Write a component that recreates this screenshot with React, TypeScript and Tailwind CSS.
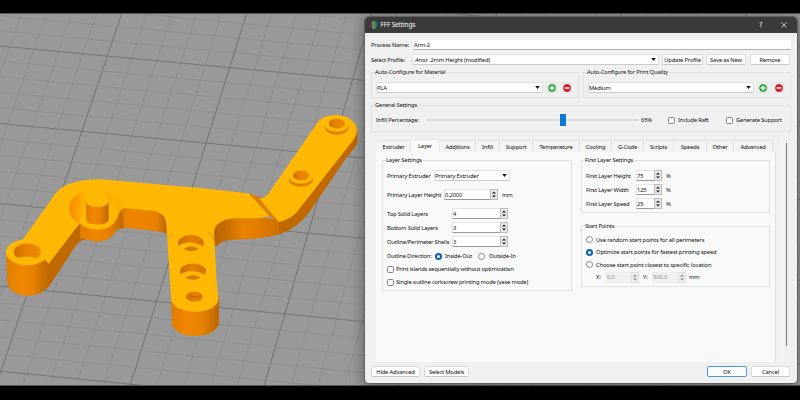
import React from "react";

const V_LINES = Array.from({ length: 46 }, (_, i) => i - 5);
const H_LINES = Array.from({ length: 30 }, (_, i) => i - 5);

function Grid() {
  return (
    <g>
      {V_LINES.map((i) => {
        const s = i / 5;
        const major = i % 5 === 0;
        return (
          <line key={`v${i}`} x1={121.5 + 125 * s} y1={14} x2={-3.7 + 134 * s} y2={385}
            stroke={major ? "#6c6c6c" : "#868686"} strokeWidth={major ? 0.9 : 0.65} />
        );
      })}
      {H_LINES.map((i) => {
        const t = i / 5;
        const major = i % 5 === 0;
        const l = 46 + 76.3 * t + 1.25 * t * t;
        const r = 80.3 + 76.4 * t + 1.35 * t * t;
        return (
          <line key={`h${i}`} x1={0} y1={l} x2={800} y2={l + ((r - l) * 800) / 364}
            stroke={major ? "#707070" : "#898989"} strokeWidth={major ? 0.9 : 0.65} />
        );
      })}
    </g>
  );
}

function Arm() {
  return (
    <g>
      <defs>
        <linearGradient id="hub" x1="0" x2="1">
          <stop offset="0" stopColor="#e07c00" /><stop offset="0.35" stopColor="#f08700" />
          <stop offset="0.65" stopColor="#e58000" /><stop offset="1" stopColor="#bd6700" />
        </linearGradient>
        <linearGradient id="wall" gradientUnits="userSpaceOnUse" x1="214" y1="0" x2="312" y2="0">
          <stop offset="0" stopColor="#b76300" /><stop offset="0.14" stopColor="#c96f00" />
          <stop offset="0.3" stopColor="#ea8300" /><stop offset="0.48" stopColor="#de7b00" />
          <stop offset="0.75" stopColor="#c46b00" /><stop offset="1" stopColor="#bf6900" />
        </linearGradient>
        <linearGradient id="hole" x1="0" x2="1">
          <stop offset="0" stopColor="#c96f00" /><stop offset="0.4" stopColor="#e68100" />
          <stop offset="1" stopColor="#f08800" />
        </linearGradient>
        <linearGradient id="holeR" x1="0" x2="1">
          <stop offset="0" stopColor="#c76d00" /><stop offset="0.5" stopColor="#e68100" />
          <stop offset="1" stopColor="#d37400" />
        </linearGradient>
        <linearGradient id="inner" gradientUnits="userSpaceOnUse" x1="118" y1="0" x2="167" y2="0">
          <stop offset="0" stopColor="#d57600" /><stop offset="0.2" stopColor="#ed8500" />
          <stop offset="0.78" stopColor="#ea8200" /><stop offset="1" stopColor="#b86300" />
        </linearGradient>
        <linearGradient id="cone" x1="0" y1="0" x2="1" y2="0.15">
          <stop offset="0" stopColor="#f28a00" /><stop offset="0.4" stopColor="#fb9800" />
          <stop offset="0.8" stopColor="#ffae00" /><stop offset="1" stopColor="#ffb803" />
        </linearGradient>
      </defs>

      {/* side walls */}
      <path d="M357.3 130V142Q356 147 346.7 157L308.3 213.3Q298 227 280 234Q264 239 246.7 239L230 240Q220 241 215.7 247L213 240L214 226L235 214L279 220L304 203L350 140Z" fill="url(#wall)" />
      <path d="M357.3 130V142Q356 147 346.7 157L308.3 213.3Q296 229 279 234.5V221Q292 217 300 208L355 134Z" fill="#bf6900" />
      <path d="M118 215L123 206L164 208L168 234Q163 232 155 231L126.7 227.7Q120 228 116 231Z" fill="url(#inner)" />
      <path d="M82 222L48 250L46 289Q50 286 52 282L75 246.7Q78 241 85 239.5L88 225Z" fill="#bf6800" />
      <path d="M80 218V238Q84 238 88 240Q99 243 107 239.5Q113 237 115.5 231Q119 228 124 227.5L122 208Z" fill="url(#hub)" />
      <path d="M6 252L7.3 284Q10 293 24 295.5Q38 297 46 289Q48 287 48.7 280V252Z" fill="url(#hub)" />
      <path d="M171 298L172 325Q178 336 195 336Q214 336 219 324V296Z" fill="url(#hub)" />

      {/* top faces */}
      <path d="M22.5 240L51 200Q56 191 63 187Q76 179 100 179.3L200 188L249 193.5L279 222L270 216.3Q262 218 256.7 218.3H235Q225 219 221 222Q214 225 214 233L216.7 282L218.5 299Q216 311.5 195 311.7Q176 311 171.3 301L166.2 222Q164 213 155 211L124 208Q119 211 117.5 217Q113 229 98 229.5Q84 229 80 223L48.5 264L38 250Z" fill="#ffb803" />
      <path d="M249 193.5L262 198L281 221.5L278.5 222.3L269.5 216.2Z" fill="#df7d00" />
      <path d="M259.7 199.2Q265 197.5 268 194L318 122Q323 115 337 115Q353 116 357.3 129Q357.3 134 354 139L300 208Q293 219 279 222Z" fill="#ffb803" />
      <path d="M208 232Q213 234 214 240" fill="none" stroke="#d98000" strokeWidth="0.8" />
      <path d="M168.5 239L172 234" fill="none" stroke="#e89300" strokeWidth="0.8" />
      <ellipse cx="27.3" cy="252.3" rx="21.4" ry="13" fill="#ffb803" />
      <ellipse cx="27.3" cy="252" rx="13.6" ry="8.4" fill="url(#hole)" />
      <path d="M17 258Q27 255.6 37 258.2Q28 262.5 17 258Z" fill="#ffb803" />

      {/* centre boss with post */}
      <path d="M80 224Q69 219 69 209Q70 195 83 192.5Q88 194 86 202V218Z" fill="url(#cone)" />
      <path d="M103 192Q119 194 124 204Q121 209 118 212L108 201Z" fill="#fdb000" />
      <path d="M80 219Q83 212 87 210L109 210Q116 213 119 211Q115 229 98 229.5Q84 229 80 222Z" fill="#ffb803" />
      <path d="M117.5 217Q119.5 208 125 207.5" fill="none" stroke="#f19d00" strokeWidth="0.8" />
      <path d="M86 202V220Q88 224.5 97.3 224.5Q106 224.5 108.7 220V202Z" fill="url(#hub)" />
      <ellipse cx="97.3" cy="201.5" rx="11.3" ry="5.6" fill="#ffb803" />

      {/* holes in the lower leg */}
      <ellipse cx="190.9" cy="243" rx="13" ry="7.9" fill="url(#holeR)" />
      <path d="M177.5 246.5Q184 241.8 191 242.8Q199 243.5 204.2 247Q198 252.8 190 252.4Q182 252 177.5 246.5Z" fill="#ffb803" />
      <path d="M183.5 249Q191 243.5 198.8 249Q191 253 183.5 249Z" fill="#da7900" />
      <ellipse cx="193" cy="271.3" rx="13" ry="7.9" fill="url(#holeR)" />
      <path d="M179.6 275Q186 270.5 193 271.2Q201 272 206 275.5Q200 281.3 192 281Q184 280.4 179.6 275Z" fill="#ffb803" />
      <path d="M185.3 277.6Q193 272.2 200.6 277.6Q193 282 185.3 277.6Z" fill="#da7900" />
      <ellipse cx="194.3" cy="296.8" rx="8.2" ry="5" fill="url(#holeR)" />
      <path d="M190 296.8H199" stroke="#aa6200" strokeWidth="0.7" />

      {/* raised bushings on the upper arm */}
      <path d="M325 125V129Q328 134.7 336.7 134.7Q346 134.5 348.7 129V125Z" fill="#e47e00" />
      <ellipse cx="336.8" cy="125" rx="11.8" ry="6.8" fill="#ffb803" />
      <ellipse cx="336.8" cy="123.6" rx="8" ry="4.9" fill="url(#hole)" />
      <path d="M289 177V181Q292 186.7 300.7 186.7Q310 186.5 312.9 181V177Z" fill="#e47e00" />
      <ellipse cx="301" cy="177" rx="11.9" ry="6.8" fill="#ffb803" />
      <ellipse cx="301" cy="175.5" rx="8" ry="4.9" fill="url(#hole)" />
    </g>
  );
}

function Caret({ className = "" }: { className?: string }) {
  return (
    <svg viewBox="0 0 6 4" className={`block h-[3px] w-[5px] shrink-0 ${className}`}>
      <path d="M0 0h6L3 4z" fill="#111" />
    </svg>
  );
}

function Combo({ value, className = "" }: { value: string; className?: string }) {
  return (
    <div className={`flex shrink-0 items-center justify-between rounded-[1.5px] border border-[#e0e0e0] border-b-[#cbcbcb] bg-[#fdfdfd] pr-[2px] ${className}`}>
      <span>{value}</span>
      <Caret />
    </div>
  );
}

function Button({ children, className = "" }: { children: React.ReactNode; className?: string }) {
  return (
    <button className={`flex h-[11px] shrink-0 items-center justify-center rounded-[2px] border bg-[#fdfdfd] ${className}`}>
      {children}
    </button>
  );
}

function RoundIcon({ minus = false, className = "" }: { minus?: boolean; className?: string }) {
  return (
    <div className={`flex size-[11px] shrink-0 items-center justify-center rounded-[2px] border border-[#e2e2e2] bg-[#fbfbfb] ${className}`}>
      <svg viewBox="0 0 8 8" className="block size-[8px] shrink-0">
        <circle cx="4" cy="4" r="3.9" fill={minus ? "#dc1f2b" : "#3bab4b"} />
        <path d={minus ? "M1.7 4H6.3" : "M1.8 4H6.2M4 1.8V6.2"} stroke="#fff" strokeWidth="1.3" />
      </svg>
    </div>
  );
}

function Spin({ value, className = "", disabled = false }: { value: string; className?: string; disabled?: boolean }) {
  return (
    <div className={`flex h-[11px] shrink-0 items-stretch justify-between border ${disabled ? "border-[#ededed] bg-[#f1f1f1] text-[#8d8d8d]" : "border-[#e4e4e4] border-b-[#9a9a9a] bg-white"} ${className}`}>
      <span className="self-center">{value}</span>
      <div className={`-my-px -mr-px flex w-[8px] items-center justify-center border ${disabled ? "border-[#dedede] bg-[#eee]" : "border-[#bdbdbd] bg-[#e9e9e9]"}`}>
        <svg viewBox="0 0 4 7" className="block h-[7px] w-[4px] shrink-0">
          <path d="M0 2.6L2 .4L4 2.6zM0 4.4L2 6.6L4 4.4z" fill={disabled ? "#888" : "#222"} />
        </svg>
      </div>
    </div>
  );
}

function Check({ className = "" }: { className?: string }) {
  return <span className={`block size-[7px] shrink-0 rounded-[1.5px] border border-[#858585] bg-[#f8f8f8] ${className}`} />;
}

function Radio({ on = false }: { on?: boolean }) {
  return <span className={`block size-[7px] shrink-0 rounded-full bg-white ${on ? "border-2 border-[#0560b6]" : "border border-[#8a8a8a]"}`} />;
}

function Group({ title, legend = "bg-[#f0f0f0]", className = "", children }: { title: string; legend?: string; className?: string; children?: React.ReactNode }) {
  return (
    <section className={`shrink-0 border border-[#e0e0e0] ${className}`}>
      <h2 className={`-mt-[5px] ml-[3px] h-[8px] w-fit pr-px leading-[8px] ${legend}`}>{title}</h2>
      {children}
    </section>
  );
}

const TABS: [string, string][] = [
  ["Extruder", "w-[34px]"], ["Layer", "w-[29px]"], ["Additions", "w-[36px]"], ["Infill", "w-[24px]"],
  ["Support", "w-[33px]"], ["Temperature", "w-[47px]"], ["Cooling", "w-[32px]"], ["G-Code", "w-[32px]"],
  ["Scripts", "w-[30px]"], ["Speeds", "w-[33px]"], ["Other", "w-[27px]"], ["Advanced", "w-[39px]"],
];

function Dialog() {
  return (
    <div className="absolute left-[365px] top-[4px] flex h-[366px] w-[432px] flex-col overflow-hidden rounded-[4px] bg-[#f0f0f0] text-[5.8px] leading-[8px] tracking-[-0.18px] whitespace-nowrap text-[#111] shadow-[0_0_0_1px_#606060,0_2px_14px_2px_rgba(0,0,0,0.35)]">
      <header className="flex h-[16px] shrink-0 items-center bg-[#3b3b3b] text-white">
        <svg viewBox="0 0 8 8" className="ml-[5px] block size-[8px] shrink-0">
          <rect x="0" y="1" width="1.3" height="5" fill="#b5167c" />
          <rect x="2" y="0" width="3.6" height="8" rx="1" fill="#4a9c48" />
          <rect x="6.3" y="1" width="1.2" height="5" fill="#1e76c8" />
        </svg>
        <span className="ml-[2.5px] flex-1 text-[6.4px] tracking-[-0.1px]">FFF Settings</span>
        <span className="mr-[19px] text-[7px]">?</span>
        <svg viewBox="0 0 6 6" className="mr-[10px] block size-[6px] shrink-0">
          <path d="M.5 .5L5.5 5.5M5.5 .5L.5 5.5" stroke="#fff" strokeWidth="0.7" />
        </svg>
      </header>

      <div className="mt-[7px] flex h-[10px] shrink-0 items-center pl-[6px]">
        <span className="w-[42px] shrink-0">Process Name:</span>
        <div className="flex h-[10px] w-[378px] items-center border-b border-[#b0b0b0] bg-white pl-px">Arm-2</div>
      </div>
      <div className="mt-[4px] flex h-[11px] shrink-0 items-center pl-[6px]">
        <span className="w-[41px] shrink-0">Select Profile:</span>
        <Combo value=".4noz .2mm Height (modified)" className="h-[11px] w-[247px] pl-px" />
        <Button className="ml-[3px] w-[41px] border-[#dadada] border-b-[#c8c8c8]">Update Profile</Button>
        <Button className="ml-[3px] w-[40px] border-[#dadada] border-b-[#c8c8c8]">Save as New</Button>
        <Button className="ml-[4px] w-[40px] border-[#dadada] border-b-[#c8c8c8]">Remove</Button>
      </div>

      <div className="mt-[7px] flex shrink-0 gap-[4px] pl-[6px]">
        <Group title="Auto-Configure for Material" className="h-[26px] w-[208px]">
          <div className="mt-[6px] flex items-center pl-[4px]">
            <Combo value="PLA" className="h-[11px] w-[167px]" />
            <RoundIcon className="ml-[3px]" />
            <RoundIcon minus className="ml-[4px]" />
          </div>
        </Group>
        <Group title="Auto-Configure for Print Quality" className="h-[26px] w-[208px]">
          <div className="mt-[6px] flex items-center pl-[4px]">
            <Combo value="Medium" className="h-[11px] w-[166px]" />
            <RoundIcon className="ml-[3px]" />
            <RoundIcon minus className="ml-[5px]" />
          </div>
        </Group>
      </div>

      <Group title="General Settings" className="ml-[6px] mt-[7px] h-[27px] w-[420px]">
        <div className="mt-[5px] flex h-[12px] items-center pl-[4px]">
          <span className="w-[51px] shrink-0">Infill Percentage:</span>
          <div className="flex h-[12px] w-[211px] shrink-0 items-center">
            <div className="h-[2px] w-[133px] bg-[#dcdcdc]" />
            <div className="h-[12px] w-[6px] bg-[#0a78d7]" />
            <div className="h-[2px] flex-1 bg-[#dcdcdc]" />
          </div>
          <span className="ml-[3px] w-[27px] shrink-0">65%</span>
          <Check />
          <span className="ml-[3px] w-[48px] shrink-0">Include Raft</span>
          <Check />
          <span className="ml-[3px]">Generate Support</span>
        </div>
      </Group>

      <div className="mt-[7px] flex h-[223px] shrink-0">
        <div className="ml-[11px] flex w-[400px] shrink-0 flex-col">
          <div className="flex h-[13px] shrink-0 items-end pl-px">
            {TABS.map(([name, w]) => (
              <div key={name} className={`flex shrink-0 items-center justify-center border-r border-t ${w} ${name === "Layer" ? "h-[13px] border-[#e6e6e6] bg-[#f9f9f9] pb-[1px]" : "h-[12px] border-[#e2e2e2] bg-[#f3f3f3]"}`}>
                {name}
              </div>
            ))}
          </div>
          <div className="flex h-[210px] shrink-0 border-r border-[#e2e2e2] bg-[#f9f9f9]">
            <Group title="Layer Settings" legend="bg-[#f9f9f9]" className="ml-[6px] mt-[8px] h-[131px] w-[190px]">
              <div className="flex flex-col pl-[4px]">
                <div className="mt-[6px] flex h-[11px] items-center">
                  <span className="w-[47px]">Primary Extruder</span>
                  <Combo value="Primary Extruder" className="h-[11px] w-[76px]" />
                </div>
                <div className="mt-[8px] flex h-[11px] items-center">
                  <span className="w-[57px]">Primary Layer Height</span>
                  <Spin value="0.2000" className="w-[54px]" />
                  <span className="ml-[4px]">mm</span>
                </div>
                <div className="mt-[8px] flex flex-col gap-[3px]">
                  {[["Top Solid Layers", "4"], ["Bottom Solid Layers", "3"], ["Outline/Perimeter Shells", "3"]].map(([label, v]) => (
                    <div key={label} className="flex h-[11px] items-center">
                      <span className="w-[65px]">{label}</span>
                      <Spin value={v} className="w-[56px]" />
                    </div>
                  ))}
                </div>
                <div className="mt-[5px] flex h-[8px] items-center">
                  <span className="w-[48px]">Outline Direction:</span>
                  <Radio on />
                  <span className="ml-[3px] w-[33px]">Inside-Out</span>
                  <Radio />
                  <span className="ml-[4px]">Outside-In</span>
                </div>
                <div className="mt-[5px] flex h-[8px] items-center">
                  <Check />
                  <span className="ml-[2px]">Print islands sequentially without optimization</span>
                </div>
                <div className="mt-[5px] flex h-[8px] items-center">
                  <Check />
                  <span className="ml-[2px]">Single outline corkscrew printing mode (vase mode)</span>
                </div>
              </div>
            </Group>
            <div className="ml-[9px] mt-[8px] flex w-[189px] shrink-0 flex-col">
              <Group title="First Layer Settings" legend="bg-[#f9f9f9]" className="h-[53px]">
                <div className="mt-[6px] flex flex-col gap-[3px] pl-[4px]">
                  {[["First Layer Height", "75"], ["First Layer Width", "125"], ["First Layer Speed", "25"]].map(([label, v]) => (
                    <div key={label} className="flex h-[11px] items-center">
                      <span className="w-[50px]">{label}</span>
                      <Spin value={v} className="w-[26px]" />
                      <span className="ml-[4px]">%</span>
                    </div>
                  ))}
                </div>
              </Group>
              <Group title="Start Points" legend="bg-[#f9f9f9]" className="mt-[13px] h-[61px]">
                <div className="mt-[5.5px] flex flex-col gap-[4.5px] pl-[4px] tracking-[-0.15px]">
                  <div className="flex h-[8px] items-center gap-[3px]"><Radio />Use random start points for all perimeters</div>
                  <div className="flex h-[8px] items-center gap-[3px]"><Radio on />Optimize start points for fastest printing speed</div>
                  <div className="flex h-[8px] items-center gap-[3px]"><Radio />Choose start point closest to specific location</div>
                  <div className="flex h-[8px] items-center pl-[10px]">
                    <span className="w-[10px]">X:</span>
                    <Spin value="0.0" disabled className="w-[33px]" />
                    <span className="ml-[4px] w-[9px]">Y:</span>
                    <Spin value="500.0" disabled className="w-[34px]" />
                    <span className="ml-[3px]">mm</span>
                  </div>
                </div>
              </Group>
            </div>
          </div>
        </div>
        <div className="ml-[5px] w-px shrink-0 bg-[#f7f7f7]" />
        <div className="ml-[4px] mt-[4px] h-[203px] w-px shrink-0 bg-[#777]" />
      </div>

      <footer className="mt-[4px] flex shrink-0 pl-[6px]">
        <Button className="w-[49px] border-[#dadada] border-b-[#c8c8c8]">Hide Advanced</Button>
        <Button className="ml-[4px] w-[45px] border-[#dadada] border-b-[#c8c8c8]">Select Models</Button>
        <Button className="ml-[238px] w-[40px] border-[#4d9bd6]">OK</Button>
        <Button className="ml-[4px] w-[39px] border-[#dadada] border-b-[#c8c8c8]">Cancel</Button>
      </footer>
    </div>
  );
}

export default function App() {
  return (
    <div className="relative h-[400px] w-[800px] overflow-hidden bg-black pt-[13px] font-['Noto_Sans','Open_Sans',sans-serif]">
      <div className="relative h-[373px] w-[800px] overflow-hidden">
        <div className="h-[373px] border-y border-[#555] bg-[#999999]">
          <svg viewBox="0 14 800 371" className="block h-[371px] w-[800px]">
            <Grid />
            <Arm />
          </svg>
        </div>
        <Dialog />
      </div>
    </div>
  );
}
